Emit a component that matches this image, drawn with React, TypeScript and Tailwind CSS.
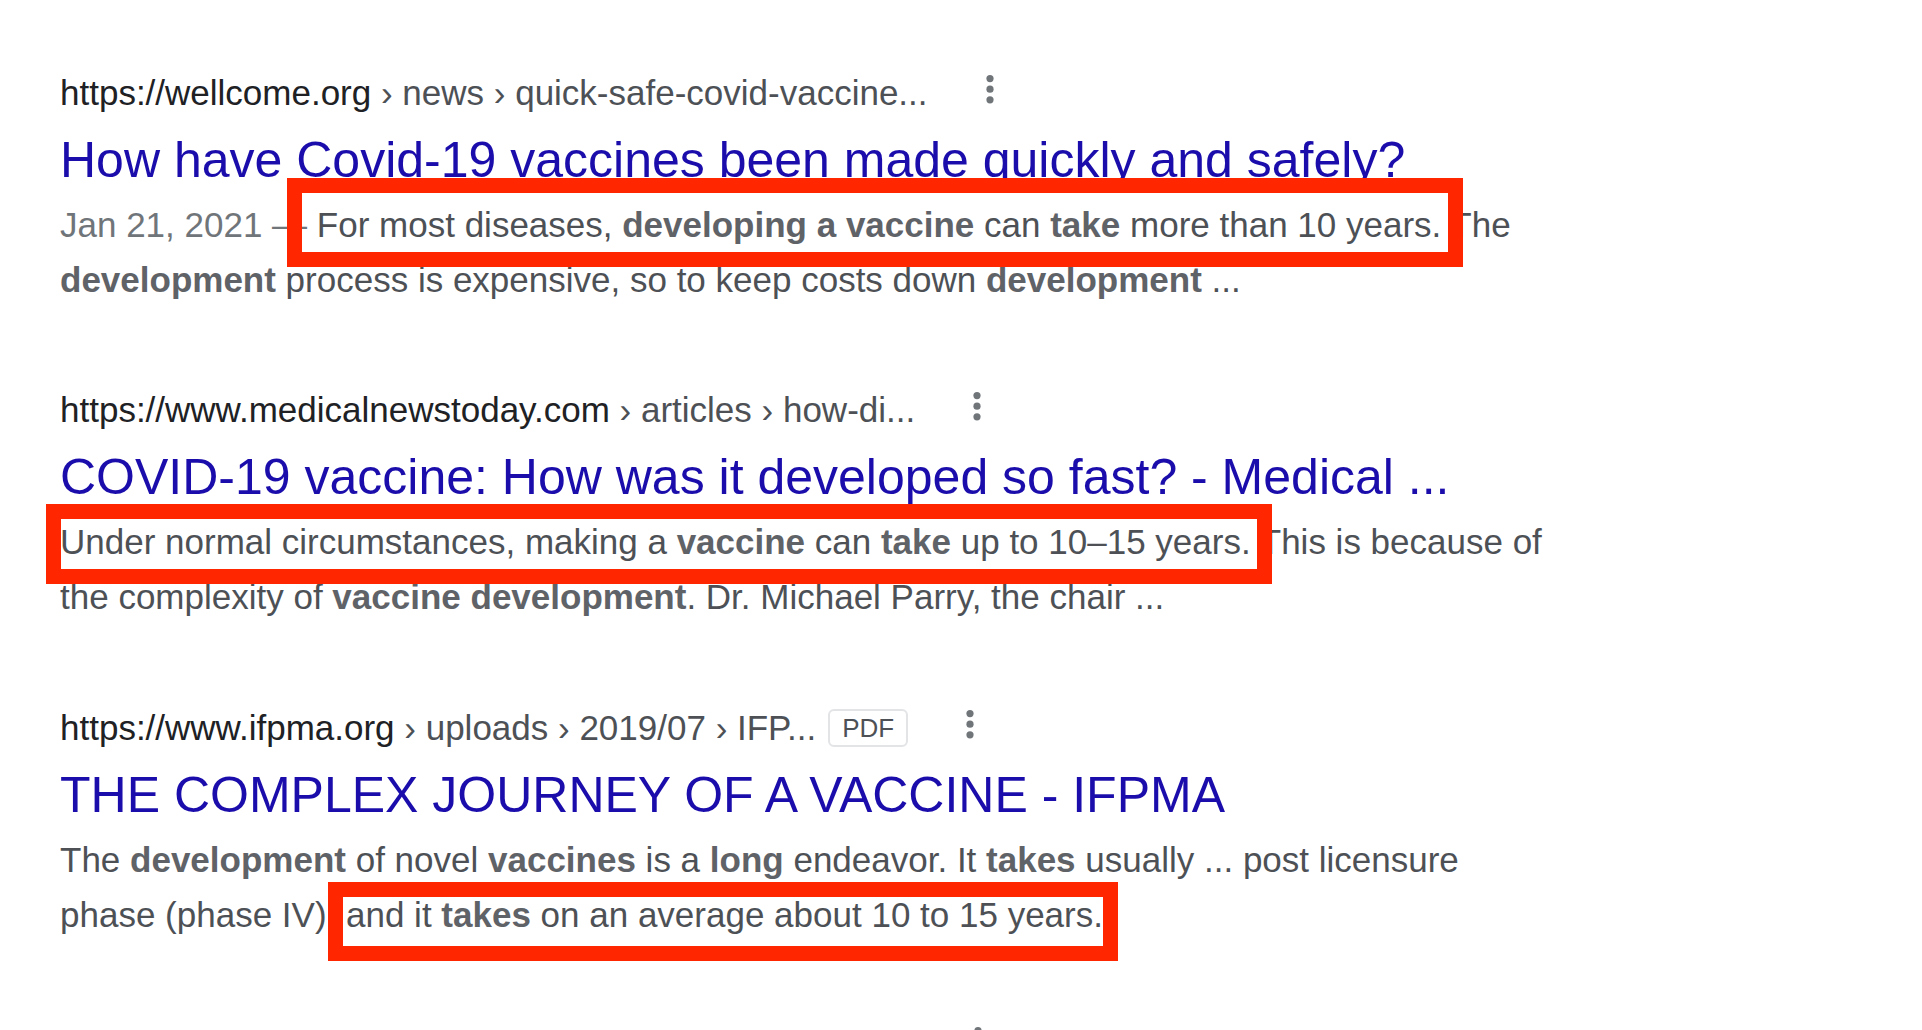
import React from "react";

type Seg = { t: string; b?: boolean; d?: boolean };

const Dots = () => (
  <svg width="14" height="29" viewBox="0 0 14 29" className="shrink-0 ml-[55px] mt-[6px]">
    <circle cx="7" cy="3.6" r="3.6" fill="#70757a" />
    <circle cx="7" cy="14.2" r="3.6" fill="#70757a" />
    <circle cx="7" cy="24.8" r="3.6" fill="#70757a" />
  </svg>
);

function Line({ segs }: { segs: Seg[] }) {
  return (
    <div className="whitespace-pre h-[55px] leading-[55px]">
      {segs.map((s, i) =>
        s.b ? (
          <b key={i} className="font-bold text-[#5f6368]">
            {s.t}
          </b>
        ) : s.d ? (
          <span key={i} className="text-[#70757a]">
            {s.t}
          </span>
        ) : (
          <span key={i}>{s.t}</span>
        )
      )}
    </div>
  );
}

function Result({
  domain,
  crumbs,
  pdf,
  title,
  lines,
}: {
  domain: string;
  crumbs: string;
  pdf?: boolean;
  title: string;
  lines: Seg[][];
}) {
  return (
    <div className="flex flex-col">
      <div className="flex items-start h-[48px] leading-[48px] text-[35px] whitespace-pre">
        <span className="text-[#202124]">{domain}</span>
        <span className="text-[#4d5156]">{crumbs}</span>
        {pdf && (
          <span className="ml-[12px] mt-[5px] h-[38px] px-[12px] border-2 border-[#e3e4e6] rounded-[6px] text-[26px] leading-[34px] text-[#4d5156]">
            PDF
          </span>
        )}
        <Dots />
      </div>
      <div className="mt-[12px] h-[62px] leading-[62px] text-[50px] text-[#1a0dab] whitespace-pre">
        {title}
      </div>
      <div className="mt-[6px] text-[35px] text-[#4d5156]">
        {lines.map((l, i) => (
          <Line key={i} segs={l} />
        ))}
      </div>
    </div>
  );
}

export default function App() {
  return (
    <div
      className="relative w-[1922px] h-[1030px] overflow-hidden bg-white"
      style={{ fontFamily: '"Liberation Sans", Arial, sans-serif' }}
    >
      <div className="flex flex-col gap-[79.5px] pl-[60px] pt-[68.5px]">
        <Result
          domain="https://wellcome.org"
          crumbs=" › news › quick-safe-covid-vaccine..."
          title="How have Covid-19 vaccines been made quickly and safely?"
          lines={[
            [
              { t: "Jan 21, 2021 — ", d: true },
              { t: "For most diseases, " },
              { t: "developing a vaccine", b: true },
              { t: " can " },
              { t: "take", b: true },
              { t: " more than 10 years. The" },
            ],
            [
              { t: "development", b: true },
              { t: " process is expensive, so to keep costs down " },
              { t: "development", b: true },
              { t: " ..." },
            ],
          ]}
        />
        <Result
          domain="https://www.medicalnewstoday.com"
          crumbs=" › articles › how-di..."
          title="COVID-19 vaccine: How was it developed so fast? - Medical ..."
          lines={[
            [
              { t: "Under normal circumstances, making a " },
              { t: "vaccine", b: true },
              { t: " can " },
              { t: "take", b: true },
              { t: " up to 10–15 years. This is because of" },
            ],
            [
              { t: "the complexity of " },
              { t: "vaccine development", b: true },
              { t: ". Dr. Michael Parry, the chair ..." },
            ],
          ]}
        />
        <Result
          domain="https://www.ifpma.org"
          crumbs=" › uploads › 2019/07 › IFP..."
          pdf
          title="THE COMPLEX JOURNEY OF A VACCINE - IFPMA"
          lines={[
            [
              { t: "The " },
              { t: "development", b: true },
              { t: " of novel " },
              { t: "vaccines", b: true },
              { t: " is a " },
              { t: "long", b: true },
              { t: " endeavor. It " },
              { t: "takes", b: true },
              { t: " usually ... post licensure" },
            ],
            [
              { t: "phase (phase IV)  and it " },
              { t: "takes", b: true },
              { t: " on an average about 10 to 15 years." },
            ],
          ]}
        />
        <Result
          domain="https://www.mayoclinic.org"
          crumbs=" › history-disease-outbreak..."
          title="History of disease outbreaks and vaccine timeline"
          lines={[[{ t: "Vaccine development is a long, complex process, often lasting 10-15 years" }]]}
        />
      </div>

      {/* annotation boxes */}
      <div className="absolute z-10 left-[287px] top-[178px] w-[1176px] h-[89px] border-[15px] border-[#ff2600]" />
      <div className="absolute z-10 left-[46px] top-[504px] w-[1226px] h-[80px] border-[15px] border-[#ff2600]" />
      <div className="absolute z-10 left-[328px] top-[882px] w-[790px] h-[79px] border-[15px] border-[#ff2600]" />
    </div>
  );
}
